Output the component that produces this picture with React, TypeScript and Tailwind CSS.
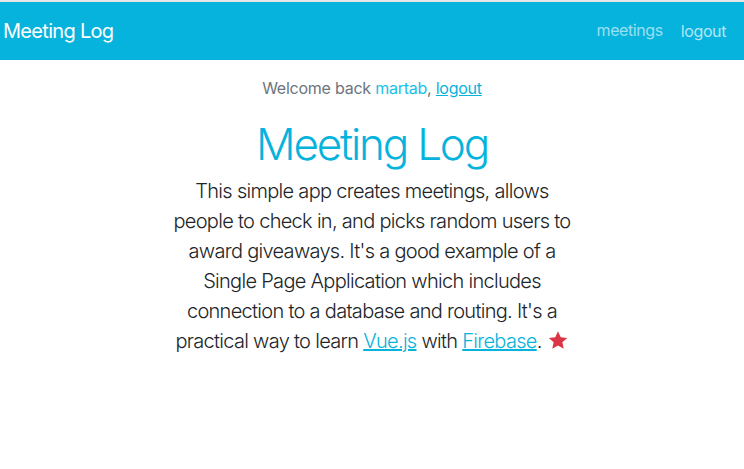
import React from "react";

export default function App() {
  return (
    <div className="min-h-[469px] bg-white" style={{ fontFamily: "Inter, 'Noto Sans', sans-serif" }}>
      <div className="h-[2px] bg-[#e6e6e6]" />
      <nav className="h-[58px] bg-[#06b3dd] flex items-center justify-between pl-[3px] pr-[18px]">
        <span className="text-white text-[20px] leading-none tracking-[-0.035em]">Meeting Log</span>
        <div className="flex items-center gap-[18px] text-[16px] tracking-[-0.025em]">
          <a className="text-white/60 -mt-[3px]">meetings</a>
          <a className="text-white/70">logout</a>
        </div>
      </nav>
      <div className="flex flex-col items-center">
        <p className="mt-[16px] text-[16px] leading-[24px] text-[#6c757d] tracking-[-0.015em]">
          Welcome back <span className="text-[#17c1e8]">martab</span>,{" "}
          <a className="text-[#06b3dd] underline">logout</a>
        </p>
        <h1 className="mt-[19px] text-[44px] leading-[50px] font-light text-[#06b3dd] tracking-[-0.05em]">Meeting Log</h1>
        <p className="mt-[7px] w-[400px] text-center text-[20px] leading-[30px] font-light text-[#212529] tracking-[-0.035em]">
          This simple app creates meetings, allows people to check in, and picks random users to award giveaways.
          It's a good example of a Single Page Application which includes connection to a database and routing.
          It's a practical way to learn <a className="text-[#06b3dd] underline">Vue.js</a> with{" "}
          <a className="text-[#06b3dd] underline">Firebase</a>.{" "}
          <svg className="inline-block align-[-3px]" width="22" height="21" viewBox="0 0 24 24">
            <path
              fill="#dc3545"
              d="M12 1.5l3.09 6.77 7.41.81-5.52 5.02 1.54 7.3L12 17.7l-6.52 3.7 1.54-7.3L1.5 9.08l7.41-.81z"
            />
          </svg>
        </p>
      </div>
    </div>
  );
}
